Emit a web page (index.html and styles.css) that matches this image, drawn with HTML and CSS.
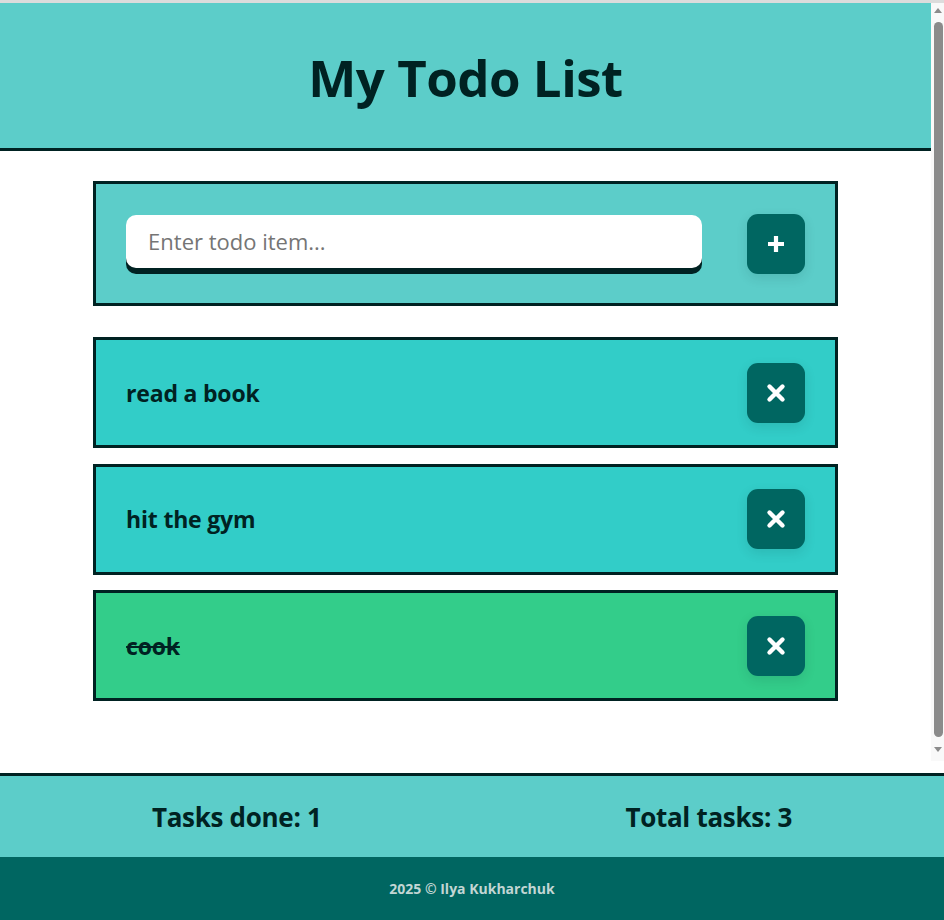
FILE: index.html
```html
<!DOCTYPE html>
<html lang="en">
<head>
<meta charset="utf-8">
<title>My Todo List</title>
<link rel="stylesheet" href="styles.css">
</head>
<body>
<div class="app">
  <div class="viewport">
    <div class="scroll-area">
      <header class="header">
        <h1 class="title">My Todo List</h1>
      </header>
      <main class="main">
        <form class="add-form" onsubmit="return false">
          <input class="add-input" type="text" placeholder="Enter todo item...">
          <button class="btn" type="button" aria-label="Add">
            <svg width="20" height="20" viewBox="0 0 20 20"><path d="M10 2v16M2 10h16" stroke="#fff" stroke-width="4.2" fill="none"/></svg>
          </button>
        </form>
        <ul class="todo-list">
          <li class="todo">
            <span class="todo-text">read a book</span>
            <button class="btn" type="button" aria-label="Delete">
              <svg width="20" height="20" viewBox="0 0 20 20"><path d="M3.5 3.5l13 13M16.5 3.5l-13 13" stroke="#fff" stroke-width="4.4" stroke-linecap="round" fill="none"/></svg>
            </button>
          </li>
          <li class="todo">
            <span class="todo-text">hit the gym</span>
            <button class="btn" type="button" aria-label="Delete">
              <svg width="20" height="20" viewBox="0 0 20 20"><path d="M3.5 3.5l13 13M16.5 3.5l-13 13" stroke="#fff" stroke-width="4.4" stroke-linecap="round" fill="none"/></svg>
            </button>
          </li>
          <li class="todo todo-done">
            <span class="todo-text">cook</span>
            <button class="btn" type="button" aria-label="Delete">
              <svg width="20" height="20" viewBox="0 0 20 20"><path d="M3.5 3.5l13 13M16.5 3.5l-13 13" stroke="#fff" stroke-width="4.4" stroke-linecap="round" fill="none"/></svg>
            </button>
          </li>
        </ul>
      </main>
    </div>
    <div class="scrollbar" aria-hidden="true">
      <span class="sb-arrow sb-up"></span>
      <span class="sb-thumb"></span>
      <span class="sb-arrow sb-down"></span>
    </div>
  </div>
  <section class="stats">
    <span class="stat">Tasks done: 1</span>
    <span class="stat">Total tasks: 3</span>
  </section>
  <footer class="footer">2025 © Ilya Kukharchuk</footer>
</div>
</body>
</html>
```
FILE: styles.css
```css
* { box-sizing: border-box; }

html, body {
  margin: 0;
  padding: 0;
}

body {
  border-top: 3px solid #dcdcdc;
  font-family: "Open Sans", "Noto Sans", sans-serif;
  color: #002222;
  background: #fff;
}

.app {
  height: 917px;
  display: flex;
  flex-direction: column;
}

.viewport {
  flex: 1;
  min-height: 0;
  display: flex;
}

.scroll-area {
  flex: 1;
  min-width: 0;
  overflow-y: auto;
  scrollbar-width: none;
}
.scroll-area::-webkit-scrollbar {
  display: none;
}

.scrollbar {
  flex: none;
  width: 13px;
  background: #f9f9f9;
  display: flex;
  flex-direction: column;
  align-items: center;
  padding: 5px 0 9px 1px;
}

.sb-arrow {
  width: 0;
  height: 0;
  border-left: 4px solid transparent;
  border-right: 4px solid transparent;
}
.sb-up {
  border-bottom: 5px solid #8b8b8b;
}
.sb-down {
  border-top: 5px solid #8b8b8b;
}

.sb-thumb {
  flex: 1;
  width: 9px;
  margin: 9px 0 10px;
  border-radius: 5px;
  background: #8b8b8b;
}

.header {
  height: 148px;
  background: #5ccdc9;
  border-bottom: 3px solid #002222;
  display: flex;
  align-items: center;
  justify-content: center;
}

.title {
  margin: 0;
  font-size: 51px;
  font-weight: 700;
  letter-spacing: -0.5px;
  color: #002222;
  line-height: 1;
  padding-top: 4px;
}

.main {
  width: 80%;
  margin: 0 auto;
  padding: 30px 0 66px;
}

.add-form {
  display: flex;
  align-items: center;
  gap: 45px;
  padding: 30px 30px 29px;
  background: #5ccdc9;
  border: 3px solid #002222;
}

.add-input {
  flex: 1;
  min-width: 0;
  height: 53px;
  margin-bottom: 6px;
  border: none;
  border-radius: 10px;
  background: #fff;
  box-shadow: 0 6px 0 #002222;
  padding: 0 22px;
  font-family: "Open Sans", "Noto Sans", sans-serif;
  font-size: 22px;
  color: #002222;
  outline: none;
}
.add-input::placeholder {
  color: #757575;
}

.btn {
  flex: none;
  width: 58px;
  height: 60px;
  border: none;
  border-radius: 11px;
  background: #006661;
  box-shadow: 0 4px 12px rgba(0, 40, 40, 0.12);
  display: flex;
  align-items: center;
  justify-content: center;
  padding: 0;
  cursor: pointer;
}
.btn svg { display: block; }

.todo-list {
  list-style: none;
  margin: 31px 0 0;
  padding: 0;
  display: flex;
  flex-direction: column;
  gap: 15.5px;
}

.todo {
  display: flex;
  align-items: center;
  justify-content: space-between;
  height: 111px;
  padding: 0 30px;
  background: #32cdc8;
  border: 3px solid #002222;
}

.todo-done {
  background: #33cd8a;
}

.todo-text {
  font-size: 23px;
  font-weight: 700;
  letter-spacing: -0.2px;
  color: #002222;
}

.todo-done .todo-text {
  text-decoration: line-through;
}

.stats {
  margin-top: 12px;
  height: 84px;
  border-top: 3px solid #002222;
  background: #5ccdc9;
  display: flex;
  align-items: center;
  justify-content: space-around;
}

.stat {
  font-size: 26px;
  font-weight: 700;
  letter-spacing: -0.3px;
  color: #002222;
}

.footer {
  height: 63px;
  background: #006661;
  color: #c2d6d4;
  font-size: 14px;
  font-weight: 700;
  display: flex;
  align-items: center;
  justify-content: center;
}
```
